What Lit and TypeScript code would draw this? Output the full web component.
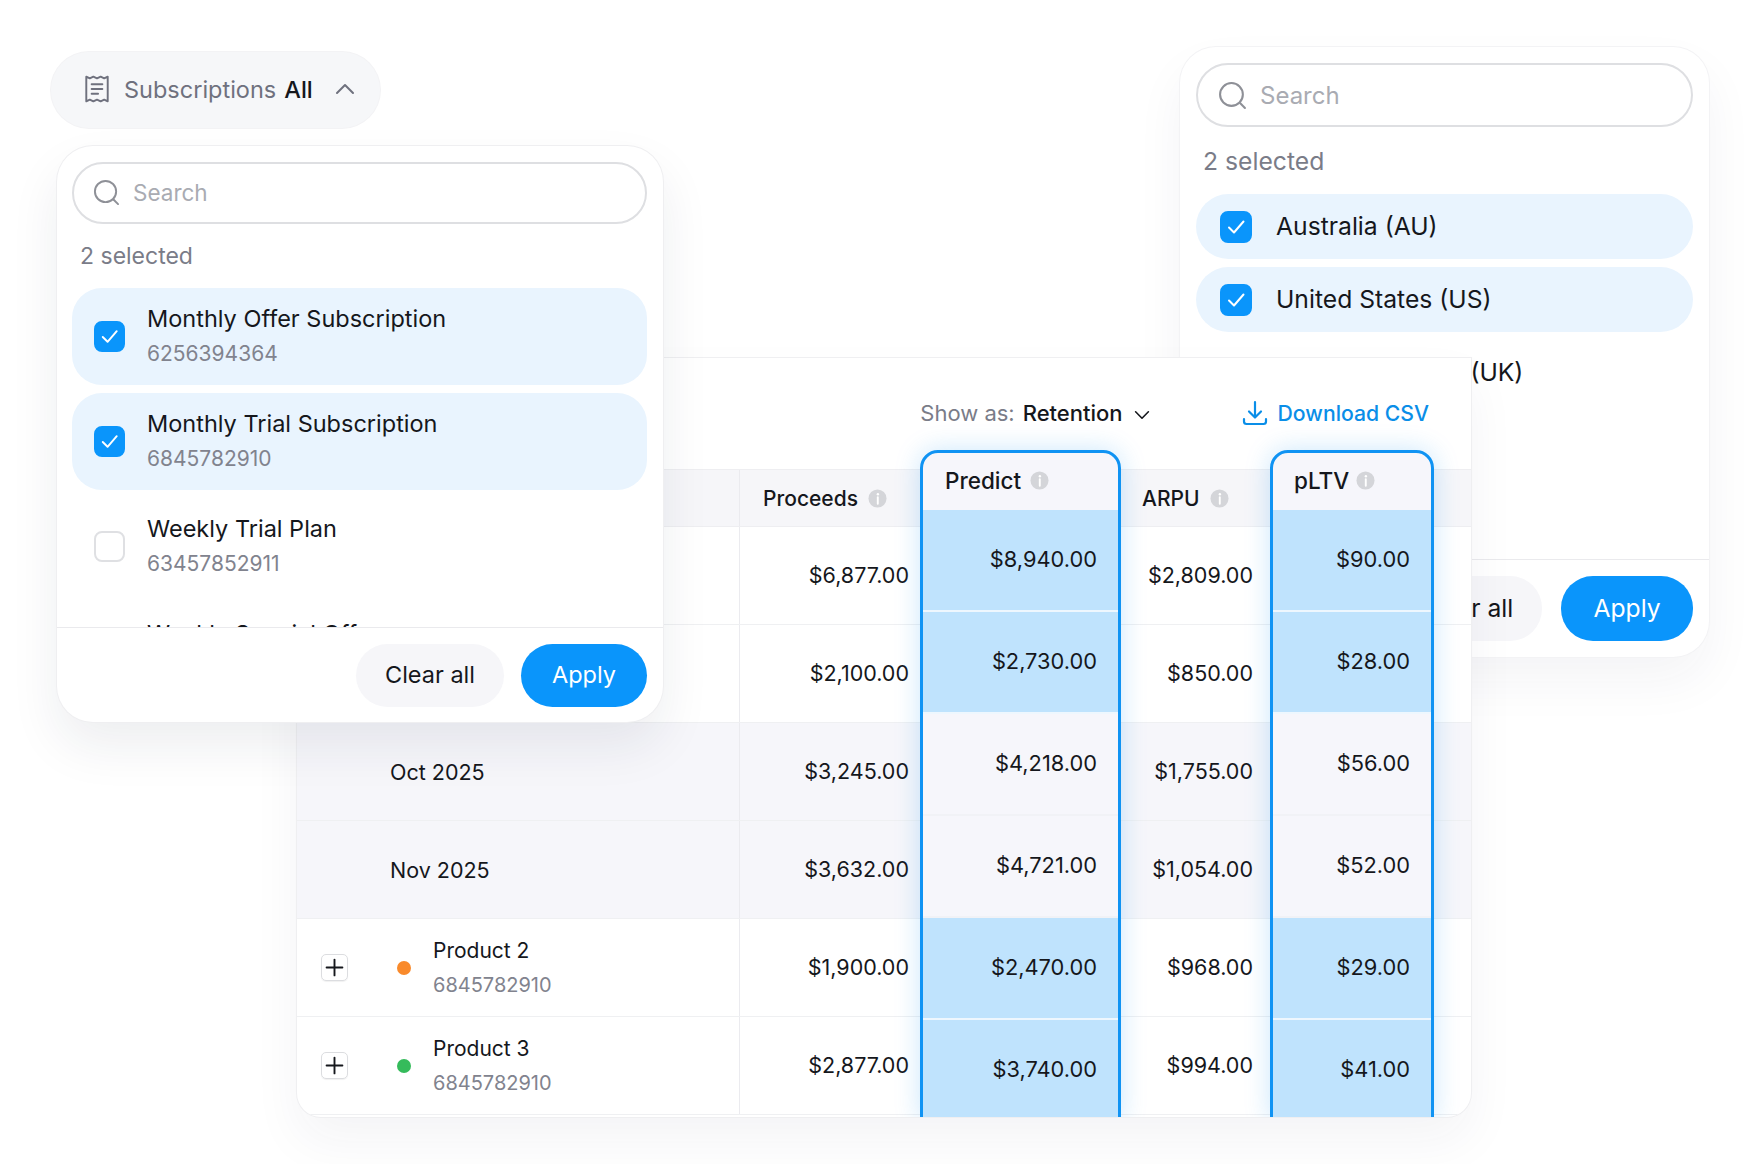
import { LitElement, html, css, svg } from 'lit';
import { customElement } from 'lit/decorators.js';

const receiptIcon = html`<svg class="receipt" viewBox="0 0 24 28" fill="none" stroke="currentColor" stroke-width="1.8" stroke-linejoin="round" stroke-linecap="round">
  <path d="M2 2.5l3.3 1.6L8.6 2.5l3.4 1.6 3.4-1.6 3.3 1.6L22 2.5v23l-3.3-1.6-3.3 1.6-3.4-1.6-3.4 1.6-3.3-1.6L2 25.5z"/>
  <path d="M7 9.5h10M7 14h10M7 18.5h6"/>
</svg>`;

const searchIcon = html`<svg class="search-icon" viewBox="0 0 28 28" fill="none" stroke="currentColor" stroke-width="2" stroke-linecap="round">
  <circle cx="13" cy="13" r="11"/><path d="M21.5 21.5l4.5 4.5"/>
</svg>`;

const checkIcon = svg`<path d="M7 14.5l5 5 9.5-11" fill="none" stroke="#fff" stroke-width="2" stroke-linecap="round" stroke-linejoin="round"/>`;

const chevron = (up: boolean) => html`<svg class="chev" viewBox="0 0 20 12" fill="none" stroke="currentColor" stroke-width="2" stroke-linecap="round" stroke-linejoin="round">
  <path d=${up ? 'M2 10l8-8 8 8' : 'M2 2l8 8 8-8'}/>
</svg>`;

const downloadIcon = html`<svg class="dl" viewBox="0 0 26 26" fill="none" stroke="currentColor" stroke-width="2.2" stroke-linecap="round" stroke-linejoin="round">
  <path d="M13 2v15M7 11.5l6 6 6-6M2 19v2.5a2.5 2.5 0 0 0 2.5 2.5h17a2.5 2.5 0 0 0 2.5-2.5V19"/>
</svg>`;

const infoIcon = html`<svg class="info" viewBox="0 0 20 20">
  <circle cx="10" cy="10" r="9.5" fill="#d4d5d9"/>
  <circle cx="10.4" cy="5.6" r="1.3" fill="#fff"/>
  <path d="M10.3 8.5v7" stroke="#fff" stroke-width="2" stroke-linecap="round"/>
</svg>`;

const plusIcon = html`<svg viewBox="0 0 18 18" fill="none" stroke="#15171c" stroke-width="1.8" stroke-linecap="round">
  <path d="M9 1.5v15M1.5 9h15"/>
</svg>`;

interface Pick { name: string; id?: string; on: boolean; }

const subs: Pick[] = [
  { name: 'Monthly Offer Subscription', id: '6256394364', on: true },
  { name: 'Monthly Trial Subscription', id: '6845782910', on: true },
  { name: 'Weekly Trial Plan', id: '63457852911', on: false },
  { name: 'Weekly Special Offer', id: '6845782911', on: false },
];

const countries: Pick[] = [
  { name: 'Australia (AU)', on: true },
  { name: 'United States (US)', on: true },
  { name: 'United Kingdom (UK)', on: false },
];

interface Row { title?: string; id?: string; dot?: string; tint?: boolean; proceeds: string; arpu: string; }

const rows: Row[] = [
  { proceeds: '$6,877.00', arpu: '$2,809.00' },
  { proceeds: '$2,100.00', arpu: '$850.00' },
  { title: 'Oct 2025', tint: true, proceeds: '$3,245.00', arpu: '$1,755.00' },
  { title: 'Nov 2025', tint: true, proceeds: '$3,632.00', arpu: '$1,054.00' },
  { title: 'Product 2', id: '6845782910', dot: '#f98a2b', proceeds: '$1,900.00', arpu: '$968.00' },
  { title: 'Product 3', id: '6845782910', dot: '#35bb5b', proceeds: '$2,877.00', arpu: '$994.00' },
];

const predict = ['$8,940.00', '$2,730.00', '$4,218.00', '$4,721.00', '$2,470.00', '$3,740.00'];
const pltv = ['$90.00', '$28.00', '$56.00', '$52.00', '$29.00', '$41.00'];
const pale = [false, false, true, true, false, false];

@customElement('app-root')
export class AppRoot extends LitElement {
  static styles = css`
    :host {
      display: block;
      width: 1764px;
      height: 1164px;
      position: relative;
      overflow: hidden;
      background: #fff;
      font-family: Inter, "Liberation Sans", sans-serif;
      font-size: 23.5px;
      color: #15171c;
    }
    svg { display: block; flex-shrink: 0; }

    /* the four floating pieces sit on a free canvas */
    .pill {
      position: absolute;
      left: 51px;
      top: 52px;
      width: 329px;
      height: 76px;
      box-sizing: border-box;
      padding: 0 25px 2px 33px;
      display: flex;
      align-items: center;
      border-radius: 38px;
      background: #f6f7f9;
      box-shadow: 0 0 0 1px #f3f3f5;
      color: #6f717e;
    }
    .receipt { width: 26px; height: 30px; margin-right: 14px; }
    .pill b { font-weight: 500; color: #15171c; margin-left: 8px; }
    .pill .chev { width: 20px; height: 12px; margin-left: auto; }

    .card {
      position: absolute;
      box-sizing: border-box;
      background: #fff;
      box-shadow: 0 0 0 1px #efeff1, 0 24px 50px rgba(30, 40, 70, .08);
      display: flex;
      flex-direction: column;
    }
    .left-card { left: 57px; top: 146px; width: 606px; height: 576px; border-radius: 36px; }
    .right-card {
      left: 1180px;
      top: 47px;
      width: 529px;
      height: 610px;
      border-radius: 36px;
      font-size: 24.7px;
      box-shadow: 0 0 0 1px #f3f3f5, 0 24px 50px rgba(30, 40, 70, .05);
    }

    .search {
      flex-shrink: 0;
      display: flex;
      align-items: center;
      border: 2px solid #dedfe2;
      border-radius: 32px;
      color: #a9abb2;
      box-sizing: border-box;
      font-size: 22.5px;
    }
    .left-card .search { margin: 16px 16px 0 15px; height: 62px; padding: 0 0 1px 19px; gap: 13px; }
    .right-card .search { margin: 16px 16px 0 16px; height: 64px; padding-left: 20px; gap: 13px; font-size: 24px; }
    .search-icon { width: 27px; height: 27px; color: #8e9097; }
    .right-card .search-icon { width: 29px; height: 29px; }

    .count { flex-shrink: 0; color: #7a7c88; }
    .left-card .count { margin: 18px 0 0 23px; line-height: 28px; height: 46px; font-size: 23px; }
    .right-card .count { margin: 19px 0 0 23px; line-height: 30px; height: 48px; }

    .list { flex: 1; min-height: 0; overflow: hidden; display: flex; flex-direction: column; gap: 8px; }
    .left-card .list { padding: 0 16px 0 15px; }
    .right-card .list { padding: 0 16px; }

    .opt { flex-shrink: 0; display: flex; align-items: center; }
    .opt.on { background: #e9f4fe; }
    .left-card .opt { height: 97px; border-radius: 30px; padding-left: 22px; gap: 22px; }
    .right-card .opt { height: 65px; border-radius: 33px; padding-left: 24px; gap: 24px; }
    .left-card .opt-text { padding-bottom: 3px; }
    .right-card .opt-text { padding-bottom: 2px; }

    .box {
      flex-shrink: 0;
      box-sizing: border-box;
      border-radius: 8px;
      border: 2px solid #dfe0e3;
    }
    .box.on { background: #0a95fb; border-color: #0a95fb; }
    .box svg { width: 100%; height: 100%; }
    .left-card .box { width: 31px; height: 31px; }
    .right-card .box { width: 32px; height: 32px; }

    .opt-name { line-height: 32px; }
    .opt-id { color: #81838e; font-size: 21px; line-height: 26px; margin-top: 6px; }

    .foot {
      flex-shrink: 0;
      display: flex;
      justify-content: flex-end;
      align-items: center;
      gap: 17px;
      border-top: 1px solid #eaeaed;
      padding-right: 16px;
    }
    .left-card .foot { height: 94px; }
    .right-card .foot { height: 97px; }
    .btn { display: flex; align-items: center; justify-content: center; border-radius: 32px; padding-bottom: 1px; box-sizing: border-box; }
    .btn.clear { background: #f6f6f9; }
    .btn.apply { background: #0a95fb; color: #fff; }
    .left-card .btn { height: 63px; }
    .left-card .clear { width: 148px; }
    .left-card .apply { width: 126px; }
    .right-card .btn { height: 65px; }
    .right-card .clear { width: 148px; margin-right: 2px; padding-right: 4px; }
    .right-card .apply { width: 132px; }

    .table-card {
      left: 297px;
      top: 358px;
      width: 1174px;
      height: 759px;
      border-radius: 0 0 24px 24px;
      overflow: hidden;
      font-size: 21.5px;
      box-shadow: 0 0 0 1px #efeff1, 0 24px 50px rgba(30, 40, 70, .05);
    }
    .toolbar {
      height: 111px;
      flex-shrink: 0;
      box-sizing: border-box;
      display: flex;
      align-items: center;
      justify-content: flex-end;
      padding: 0 42px 1px 0;
      font-size: 22px;
    }
    .show { color: #7a7c88; margin-right: 8px; }
    .toolbar .chev { width: 16px; height: 10px; margin: 4px 0 0 11px; }
    .retention { font-weight: 500; }
    .dl { width: 26px; height: 26px; margin: 0 10px 0 92px; color: #0a8ee8; }
    .download { color: #0a8ee8; font-weight: 500; font-size: 21.2px; }

    .line {
      display: grid;
      grid-template-columns: 443px 180px 201px 149px 1fr;
      flex-shrink: 0;
      box-sizing: border-box;
    }
    .head { height: 58px; background: #f6f6f9; border-top: 1px solid #eeeef1; border-bottom: 1px solid #eeeef1; font-weight: 500; font-size: 21px; }
    .row { height: 98px; border-bottom: 1px solid #eff0f2; }
    .row.tint { background: #f6f6fa; }
    .row:last-child { border-bottom: 0; }

    .cell { display: flex; align-items: center; gap: 10px; }
    .row .num { padding-bottom: 2px; }
    .first { border-right: 1px solid #ebebef; }
    .num { justify-content: flex-end; }
    .proceeds.num { padding-right: 11px; }
    .arpu.num { padding-right: 17px; }
    .proceeds.label { padding-left: 23px; }
    .arpu.label { padding-left: 21px; }
    .info { width: 19px; height: 19px; }

    .month { padding-left: 93px; font-size: 21.5px; }
    .plus {
      width: 27px;
      height: 27px;
      box-sizing: border-box;
      padding: 3px;
      margin-left: 24px;
      border: 1px solid #dcdde0;
      border-radius: 5px;
      box-shadow: 0 1px 1px rgba(0, 0, 0, .06);
    }
    .dot { width: 14px; height: 14px; border-radius: 50%; margin-left: 39px; }
    .prod { margin-left: 12px; line-height: 30px; font-size: 21px; padding-bottom: 2px; }
    .prod-id { color: #81838e; font-size: 20px; line-height: 26px; margin-top: 6px; }

    .col {
      position: absolute;
      top: 92px;
      bottom: -4px;
      box-sizing: border-box;
      border: 3px solid #1093f3;
      border-radius: 18px 18px 0 0;
      background: #f6f6fb;
      box-shadow: 0 0 26px rgba(16, 147, 243, .22);
      display: flex;
      flex-direction: column;
      overflow: hidden;
    }
    .col.predict { left: 623px; width: 201px; }
    .col.pltv { left: 973px; width: 164px; }
    .col-head { height: 57px; flex-shrink: 0; display: flex; align-items: center; gap: 9px; padding: 0 0 3px 22px; box-sizing: border-box; font-weight: 500; font-size: 22.5px; }
    .pltv .col-head { padding-left: 21px; gap: 7px; }
    .col-cell { height: 98px; flex-shrink: 0; display: flex; align-items: center; justify-content: flex-end; padding: 0 21px 2px 0; font-size: 21.8px; border-bottom: 2px solid #f1f2f6; }
    .col-cell.blue { background: #bfe3fd; border-bottom-color: #eef7fe; }
  `;

  private option(o: Pick) {
    return html`<div class="opt ${o.on ? 'on' : ''}">
      <div class="box ${o.on ? 'on' : ''}">
        ${o.on ? html`<svg viewBox="0 0 28 28">${checkIcon}</svg>` : ''}
      </div>
      <div class="opt-text">
        <div class="opt-name">${o.name}</div>
        ${o.id ? html`<div class="opt-id">${o.id}</div>` : ''}
      </div>
    </div>`;
  }

  private picker(cls: string, items: Pick[]) {
    return html`<div class="card ${cls}">
      <div class="search">${searchIcon}<span>Search</span></div>
      <div class="count">2 selected</div>
      <div class="list">${items.map(o => this.option(o))}</div>
      <div class="foot">
        <div class="btn clear">Clear all</div>
        <div class="btn apply">Apply</div>
      </div>
    </div>`;
  }

  private firstCell(r: Row) {
    if (!r.title) return html`<div class="cell first"></div>`;
    if (!r.dot) return html`<div class="cell first month">${r.title}</div>`;
    return html`<div class="cell first">
      <div class="plus">${plusIcon}</div>
      <div class="dot" style="background:${r.dot}"></div>
      <div class="prod">
        <div>${r.title}</div>
        <div class="prod-id">${r.id}</div>
      </div>
    </div>`;
  }

  private column(cls: string, title: string, values: string[]) {
    return html`<div class="col ${cls}">
      <div class="col-head">${title} ${infoIcon}</div>
      ${values.map((v, i) => html`<div class="col-cell ${pale[i] ? '' : 'blue'}">${v}</div>`)}
    </div>`;
  }

  render() {
    return html`
      ${this.picker('right-card', countries)}

      <div class="card table-card">
        <div class="toolbar">
          <span class="show">Show as:</span>
          <span class="retention">Retention</span>
          ${chevron(false)}
          ${downloadIcon}
          <span class="download">Download CSV</span>
        </div>
        <div class="line head">
          <div class="cell first"></div>
          <div class="cell proceeds label">Proceeds ${infoIcon}</div>
          <div></div>
          <div class="cell arpu label">ARPU ${infoIcon}</div>
          <div></div>
        </div>
        ${rows.map(r => html`<div class="line row ${r.tint ? 'tint' : ''}">
          ${this.firstCell(r)}
          <div class="cell proceeds num">${r.proceeds}</div>
          <div></div>
          <div class="cell arpu num">${r.arpu}</div>
          <div></div>
        </div>`)}
        ${this.column('predict', 'Predict', predict)}
        ${this.column('pltv', 'pLTV', pltv)}
      </div>

      <div class="pill">
        ${receiptIcon}
        <span>Subscriptions</span>
        <b>All</b>
        ${chevron(true)}
      </div>

      ${this.picker('left-card', subs)}
    `;
  }
}

declare global {
  interface HTMLElementTagNameMap { 'app-root': AppRoot; }
}
